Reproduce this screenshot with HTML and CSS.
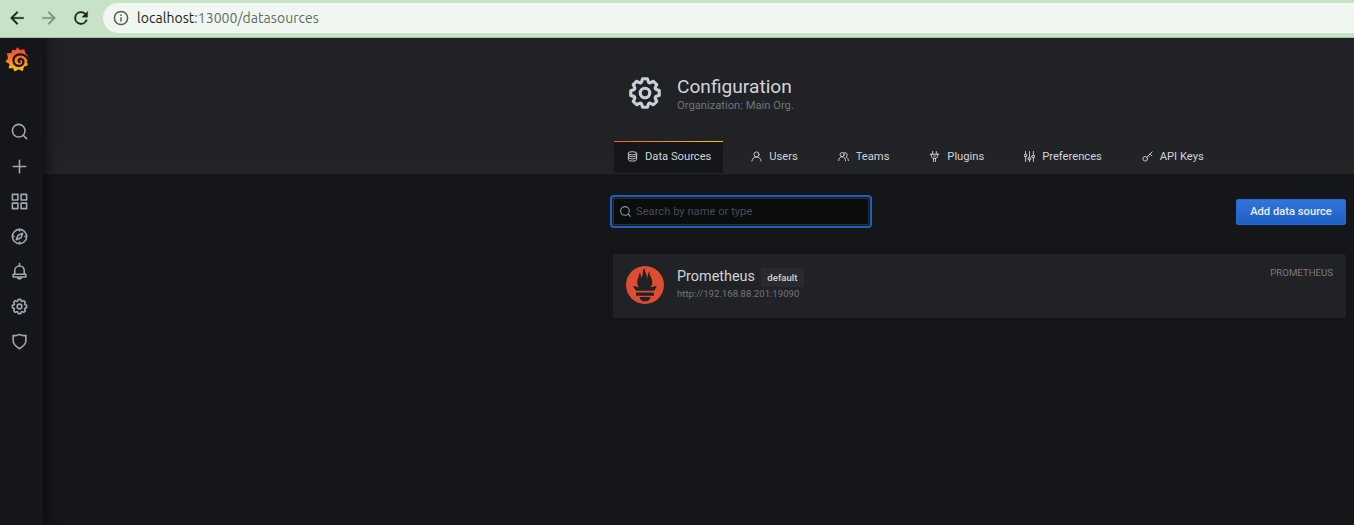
FILE: index.html
```html
<!DOCTYPE html>
<html lang="en">
<head>
<meta charset="utf-8">
<title>Configuration: Data Sources</title>
<link rel="stylesheet" href="styles.css">
</head>
<body>
<svg class="defs" aria-hidden="true">
  <defs>
    <symbol id="cog" viewBox="0 0 24 24"><path d="M21.32,9.55l-1.89-.63.89-1.78A1,1,0,0,0,20.13,6L18,3.87a1,1,0,0,0-1.15-.19l-1.78.89-.63-1.89A1,1,0,0,0,13.5,2h-3a1,1,0,0,0-.95.68L8.92,4.57,7.14,3.68A1,1,0,0,0,6,3.87L3.87,6a1,1,0,0,0-.19,1.15l.89,1.78-1.89.63A1,1,0,0,0,2,10.5v3a1,1,0,0,0,.68.95l1.89.63-.89,1.78A1,1,0,0,0,3.87,18L6,20.13a1,1,0,0,0,1.15.19l1.78-.89.63,1.89a1,1,0,0,0,.95.68h3a1,1,0,0,0,.95-.68l.63-1.89,1.78.89A1,1,0,0,0,18,20.13L20.13,18a1,1,0,0,0,.19-1.15l-.89-1.78,1.89-.63A1,1,0,0,0,22,13.5v-3A1,1,0,0,0,21.32,9.55ZM20,12.78l-1.2.4A2,2,0,0,0,17.64,16l.57,1.14-1.1,1.1L16,17.64a2,2,0,0,0-2.79,1.16l-.4,1.2H11.22l-.4-1.2A2,2,0,0,0,8,17.64l-1.14.57-1.1-1.1L6.36,16A2,2,0,0,0,5.2,13.18L4,12.78V11.22l1.2-.4A2,2,0,0,0,6.36,8L5.79,6.89l1.1-1.1L8,6.36A2,2,0,0,0,10.82,5.2l.4-1.2h1.56l.4,1.2A2,2,0,0,0,16,6.36l1.14-.57,1.1,1.1L17.64,8a2,2,0,0,0,1.16,2.79l1.2.4ZM12,8a4,4,0,1,0,4,4A4,4,0,0,0,12,8Zm0,6a2,2,0,1,1,2-2A2,2,0,0,1,12,14Z"/></symbol>
    <symbol id="search" viewBox="0 0 24 24"><g class="line"><circle cx="11" cy="11" r="8"/><path d="M17 17l4 4"/></g></symbol>
    <linearGradient id="flame" x1="0" y1="0" x2="0" y2="1"><stop offset="0" stop-color="#f0482b"/><stop offset=".45" stop-color="#f4742a"/><stop offset="1" stop-color="#fcc80e"/></linearGradient>
  </defs>
</svg>

<header class="browser">
  <svg class="nav" viewBox="0 0 24 24"><path d="M20 11H7.83l5.59-5.59L12 4l-8 8 8 8 1.41-1.41L7.83 13H20v-2z"/></svg>
  <svg class="nav nav-off" viewBox="0 0 24 24"><path d="M12 4l-1.41 1.41L16.17 11H4v2h12.17l-5.58 5.59L12 20l8-8z"/></svg>
  <svg class="nav" viewBox="0 0 24 24"><path d="M17.65 6.35A7.96 7.96 0 0 0 12 4a8 8 0 1 0 7.73 10h-2.08A6 6 0 1 1 12 6c1.66 0 3.14.69 4.22 1.78L13 11h7V4l-2.35 2.35z"/></svg>
  <div class="address">
    <svg class="info" viewBox="0 0 16 16"><circle cx="8" cy="8" r="6.6"/><path d="M8 7.2v4.2M8 4.4v1.7"/></svg>
    <span class="url">localhost<span class="url-rest">:13000/datasources</span></span>
  </div>
</header>

<div class="app">
  <nav class="sidemenu">
    <svg class="logo" viewBox="0 0 24 25">
      <path fill="url(#flame)" d="M12.4 0.2L15 3L19.300 2.200L20.200 6C22.200 7.600 23.500 10 23.800 13L22 14.500L22.800 18.400L19.200 19.500L17.600 24.200L13.700 22.300L9.600 24.600L8 21.200L3.600 21.200L4.500 17L0.400 14.500L3 11.400L2 6.300L6.400 6.100L7.200 2.800L10.300 3.200Z"/>
      <path class="swirl" d="M24.500 16.500C23.500 11 20 7.600 15.500 7.400C10.600 7.200 8.200 10.600 8.500 14C8.800 17.500 11.600 19.300 14.500 18.900C17.300 18.500 18.900 16.200 18.300 13.900C17.600 11.700 15 11.400 14 12.700C13.300 13.700 13.700 15 14.700 15.200"/>
    </svg>
    <svg class="icon" viewBox="0 0 24 24"><use href="#search"/></svg>
    <svg class="icon" viewBox="0 0 24 24"><path class="line" d="M12 4v16M4 12h16"/></svg>
    <svg class="icon" viewBox="0 0 24 24"><path class="line" d="M3 3h7v7H3zM14 3h7v7h-7zM3 14h7v7H3zM14 14h7v7h-7z"/></svg>
    <svg class="icon" viewBox="0 0 24 24"><g class="line"><circle cx="12" cy="12" r="9"/><path d="M16 8l-2 5.5L8 16l2.3-5.6zM12 3v2M12 19v2M3 12h2M19 12h2"/></g></svg>
    <svg class="icon" viewBox="0 0 24 24"><path class="line" d="M12 2v3M6 15v-4a6 6 0 0 1 12 0v4M4 15.500h16v3.500H4zM9.2 19.5c.6 1.2 1.5 1.8 2.8 1.8s2.2-.6 2.8-1.8"/></svg>
    <svg class="icon" viewBox="0 0 24 24"><use href="#cog"/></svg>
    <svg class="icon" viewBox="0 0 24 24"><path class="line" d="M12 3c-2.6 1.6-5.1 2-8 1.3v7.2c0 4.5 3.7 7 8 9.7 4.3-2.7 8-5.2 8-9.7V4.3c-2.9.7-5.4.3-8-1.3z"/></svg>
  </nav>

  <main class="page">
    <div class="page-header">
      <div class="heading">
        <svg class="heading-icon" viewBox="0 0 24 24"><use href="#cog"/></svg>
        <div>
          <h1 class="title">Configuration</h1>
          <div class="subtitle">Organization: Main Org.</div>
        </div>
      </div>
      <div class="tabs">
        <a class="tab tab-active"><svg class="tab-icon" viewBox="0 0 24 24"><g class="line"><path d="M3 5v14c0 4 18 4 18 0V5M3 9.700c0 4 18 4 18 0M3 14.400c0 4 18 4 18 0"/><ellipse cx="12" cy="5" rx="9" ry="3.500"/></g></svg><span>Data Sources</span></a>
        <a class="tab"><svg class="tab-icon" viewBox="0 0 24 24"><g class="line"><circle cx="12" cy="7.5" r="5.5"/><path d="M2 22c.7-5.5 4.2-9 10-9s9.300 3.500 10 9"/></g></svg><span>Users</span></a>
        <a class="tab"><svg class="tab-icon" viewBox="0 0 24 24"><g class="line"><circle cx="9" cy="8" r="4.500"/><path d="M1.500 21c.3-5 3-8.500 7.500-8.500s7.200 3.500 7.500 8.500M13 4c4-1.500 7 1 7 4.500 0 2-1 3.500-2.500 4.500 3.500 1.500 5 4.300 5.200 8"/></g></svg><span>Teams</span></a>
        <a class="tab"><svg class="tab-icon" viewBox="0 0 24 24"><path class="line" d="M8 1v6M16 1v6M2.500 7h19M5 7v4l3 5h8l3-5V7M10 16v7M14 16v7M10 11h4"/></svg><span>Plugins</span></a>
        <a class="tab"><svg class="tab-icon" viewBox="0 0 24 24"><path class="line" d="M3.500 1v6M3.500 13v10M1 8h5v4H1zM12 1v13M12 20v3M9.500 15h5v4h-5zM20.500 1v8M20.500 15v8M18 10h5v4h-5z"/></svg><span>Preferences</span></a>
        <a class="tab"><svg class="tab-icon" viewBox="0 0 24 24"><g class="line"><circle cx="7" cy="17" r="5"/><path d="M10.500 13.500L22 2M17.500 6.500l4 4M14 10l2 2"/></g></svg><span>API Keys</span></a>
      </div>
    </div>

    <div class="content">
      <div class="actions">
        <label class="search">
          <svg class="search-icon" viewBox="0 0 24 24"><use href="#search"/></svg>
          <input class="search-input" type="text" placeholder="Search by name or type">
        </label>
        <button class="add">Add data source</button>
      </div>
      <div class="card">
        <svg class="prometheus" viewBox="0 0 24 24"><path d="M12 0C5.373 0 0 5.372 0 12c0 6.627 5.373 12 12 12s12-5.373 12-12c0-6.628-5.373-12-12-12zm0 22.460c-1.885 0-3.414-1.260-3.414-2.814h6.828c0 1.553-1.528 2.813-3.414 2.813zm5.640-3.745H6.360v-2.046h11.280v2.046zm-.04-3.098H6.391c-.037-.043-.075-.086-.111-.13-1.155-1.401-1.427-2.133-1.690-2.879-.005-.025 1.400.287 2.395.511 0 0 .513.119 1.262.255-.72-.843-1.147-1.915-1.147-3.010 0-2.406 1.845-4.508 1.180-6.207.648.053 1.340 1.367 1.387 3.422.689-.951.977-2.690.977-3.755 0-1.103.727-2.385 1.454-2.429-.648 1.069.168 1.984.893 4.256.272.854.237 2.290.447 3.201.07-1.892.395-4.652 1.595-5.605-.529 1.200.079 2.702.494 3.424.671 1.164 1.078 2.047 1.078 3.716a4.642 4.642 0 0 1-1.110 2.996c.792-.149 1.340-.283 1.340-.283l2.573-.502s-.374 1.538-1.810 3.019z"/></svg>
        <div class="card-body">
          <div class="card-title"><span class="name">Prometheus</span><span class="badge">default</span></div>
          <div class="card-url">http://192.168.88.201:19090</div>
        </div>
        <div class="type">PROMETHEUS</div>
      </div>
    </div>
  </main>
</div>
</body>
</html>
```
FILE: styles.css
```css
* { box-sizing: border-box; }
html, body { height: 100%; }
body {
  margin: 0;
  display: flex;
  flex-direction: column;
  overflow: hidden;
  background: #141619;
  color: #d0d4da;
  font-family: Roboto, "Liberation Sans", sans-serif;
  font-size: 11.2px;
}
.defs { width: 0; height: 0; }
svg { flex: none; }
.line { fill: none; stroke: currentColor; stroke-width: 2; stroke-linecap: round; stroke-linejoin: round; }

.browser {
  flex: none;
  height: 38px;
  display: flex;
  align-items: flex-start;
  padding: 3px 0 0 7px;
  background: #c7e2c6;
  border-bottom: 1px solid #a7bfa7;
}
.nav { width: 20px; height: 20px; margin: 5px 12px 0 0; fill: #1f2420; stroke: #1f2420; stroke-width: .3; }
.nav-off { fill: #81957f; stroke: #81957f; }
.address {
  flex: 1;
  height: 30px;
  display: flex;
  align-items: center;
  padding-left: 10px;
  background: #f0f7f0;
  border-radius: 15px 0 0 15px;
}
.info { width: 16px; height: 16px; fill: none; stroke: #565d57; stroke-width: 1.5; }
.url {
  margin-left: 8px;
  font: 14px/20px Ubuntu, "Noto Sans", sans-serif;
  letter-spacing: .04px;
  color: #202421;
}
.url-rest { color: #646b65; }

.app { flex: 1; display: flex; min-height: 0; overflow: hidden; }
.sidemenu {
  flex: none;
  width: 43px;
  display: flex;
  flex-direction: column;
  align-items: flex-start;
  gap: 16px;
  padding: 9px 0 0 6px;
  background: #141619;
  box-shadow: 2px 0 12px #09090b;
  z-index: 1;
}
.logo { width: 24px; height: 25px; margin: 0 0 34px -1px; }
.swirl { fill: none; stroke: #141619; stroke-width: 2.2; stroke-linecap: round; }
.icon { width: 19px; height: 19px; margin-left: 4px; color: #9fa7b3; fill: currentColor; }

.page { flex: 1; display: flex; flex-direction: column; min-width: 0; }
.page-header {
  height: 136px;
  display: flex;
  flex-direction: column;
  justify-content: space-between;
  padding: 36px 8px 0 571px;
  background: linear-gradient(#202226 75%, #222426);
  border-bottom: 1px solid #25272b;
}
.heading { display: flex; gap: 13px; padding-left: 12px; }
.heading-icon { width: 38px; height: 38px; fill: #c7d0d9; }
.title { margin: 2px 0 0; font-size: 19.15px; line-height: 22px; font-weight: 400; }
.subtitle { margin-top: 1px; color: #6f747b; line-height: 13px; }
.tabs { display: flex; gap: 14.9px; }
.tab {
  height: 32px;
  display: flex;
  align-items: center;
  gap: 7px;
  padding: 0 12px 2px 13px;
  border-top: 1px solid transparent;
  white-space: nowrap;
}
.tab-active {
  background: #141619;
  border-image: linear-gradient(90deg, #f05a28, #fbca0a) 1;
  border-width: 1px 0 0;
  border-style: solid;
}
.tab-icon { width: 11px; height: 11px; }

.content { padding: 21px 8px 0 570px; }
.actions { display: flex; justify-content: space-between; align-items: center; margin-left: -3px; }
.search {
  width: 262px;
  height: 33px;
  display: flex;
  align-items: center;
  gap: 4px;
  padding-left: 9px;
  background: #0b0c0e;
  border: 2px solid #1f60c4;
  border-radius: 4px;
  box-shadow: inset 0 0 0 1px #141619, inset 0 0 0 2px #2c3235;
}
.search-icon { width: 13px; height: 13px; margin-left: -2px; color: #8e959d; }
.search-input { width: 220px; padding: 0 0 1px; border: 0; outline: 0; background: none; color: inherit; font: inherit; }
.search-input::placeholder { color: #464c54; }
.add {
  width: 110px;
  height: 26px;
  padding: 0;
  border: 1px solid #2769d2;
  border-radius: 2px;
  background: linear-gradient(#3274d9, #1f60c4);
  color: #e9edf2;
  font: 500 11.2px/24px Roboto, sans-serif;
}
.card {
  height: 64px;
  display: flex;
  align-items: flex-start;
  margin-top: 26px;
  padding: 12px 13px;
  background: #202226;
  border-radius: 2px;
}
.prometheus { width: 38px; height: 38px; fill: #dd4e31; }
.card-body { flex: 1; margin-left: 13px; }
.card-title { display: flex; align-items: center; height: 21px; }
.name { font-size: 14.4px; line-height: 20px; }
.badge {
  margin: 2px 0 0 6px;
  width: 43px;
  font-size: 9.6px;
  font-weight: 500;
  line-height: 19px;
  text-align: center;
  background: #292a2d;
  border-radius: 2px;
}
.card-url { margin-top: 1px; color: #70757c; font-size: 9.6px; line-height: 12px; }
.type { color: #787c82; font-size: 9.6px; line-height: 13px; letter-spacing: .03px; }
```
